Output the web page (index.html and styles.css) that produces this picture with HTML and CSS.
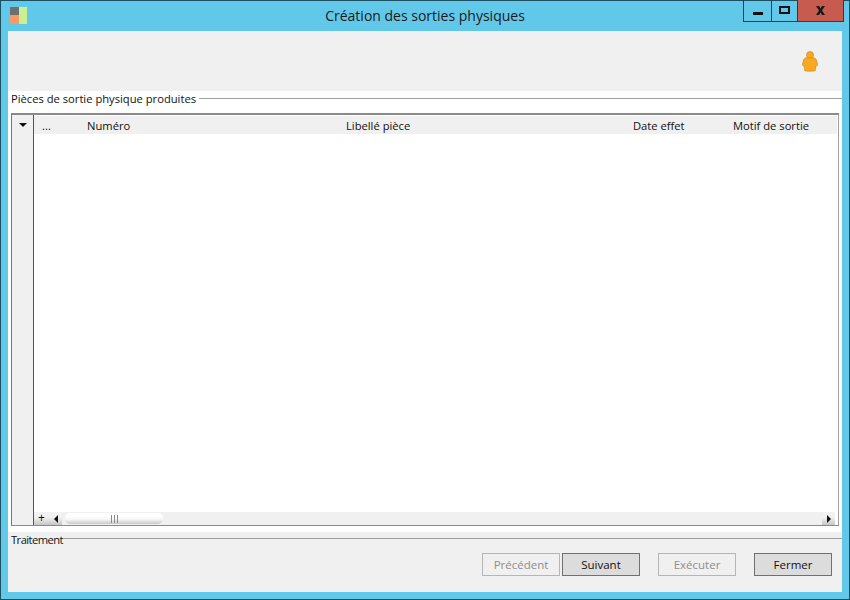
FILE: index.html
```html
<!DOCTYPE html>
<html lang="fr">
<head>
<meta charset="utf-8">
<title>Création des sorties physiques</title>
<link rel="stylesheet" href="styles.css">
</head>
<body>
<div class="window">
  <header class="titlebar">
    <svg class="app-icon" width="17" height="17" viewBox="0 0 17 17"><rect x="0" y="0" width="9" height="8" fill="#6f6f6f"/><rect x="0" y="8" width="9" height="9" fill="#f79a63"/><rect x="9" y="0" width="8" height="17" fill="#ccf08f"/></svg>
    <h1 class="title">Création des sorties physiques</h1>
    <div class="controls">
      <div class="ctl ctl-min"><span class="min-glyph"></span></div>
      <div class="ctl ctl-max"><span class="max-glyph"></span></div>
      <div class="ctl ctl-close"><svg width="11" height="9" viewBox="0 0 11 9"><path d="M1 0h3l1.500 2.500L7 0h3L7 4.500 10 9H7L5.500 6.500 4 9H1l3-4.500z" fill="#1a1a1a"/></svg></div>
    </div>
  </header>
  <main class="client">
    <div class="toolbar">
      <svg class="user" width="16" height="21" viewBox="0 0 16 21"><circle cx="8" cy="4" r="3.500" fill="#f9a825" stroke="#d98a10" stroke-width=".7"/><path d="M4 6.800h8c1.500.4 2.200 1.500 2.700 3.200l.9 3.800c-.2 1-1 1.300-2 1.400l-.4 4.600c-3 .5-7.400 .5-10.400 0L2.400 15.200c-1-.1-1.800-.4-2-1.400L1.300 10C1.800 8.300 2.500 7.200 4 6.800z" fill="#f9a825" stroke="#d98a10" stroke-width=".7"/></svg>
    </div>
    <section class="pieces">
      <div class="legend"><span>Pièces de sortie physique produites</span><i class="rule"></i></div>
      <div class="grid">
        <div class="gutter"><span class="tri-down"></span></div>
        <div class="table">
          <div class="thead">
            <span class="col c1">...</span>
            <span class="col c2">Numéro</span>
            <span class="col c3">Libellé pièce</span>
            <span class="col c4">Date effet</span>
            <span class="col c5">Motif de sortie</span>
          </div>
          <div class="tbody"></div>
          <div class="hscroll">
            <span class="plus">+</span>
            <span class="arrow"><span class="tri-left"></span></span>
            <div class="track"><div class="thumb"><span class="grip"></span></div></div>
            <span class="arrow"><span class="tri-right"></span></span>
          </div>
        </div>
      </div>
    </section>
    <section class="process">
      <div class="legend legend-t"><span>Traitement</span><i class="rule"></i></div>
      <div class="actions">
        <button class="btn off" disabled>Précédent</button>
        <button class="btn on">Suivant</button>
        <button class="btn off run" disabled>Exécuter</button>
        <button class="btn on close">Fermer</button>
      </div>
    </section>
  </main>
</div>
</body>
</html>
```
FILE: styles.css
```css
* { box-sizing: border-box; }
html, body { margin: 0; padding: 0; }
body { width: 850px; height: 600px; overflow: hidden; font-family: "Open Sans", "Noto Sans", sans-serif; font-size: 11.2px; color: #111; }
.window { width: 850px; height: 600px; display: flex; flex-direction: column; background: #62c8ea; border: 1px solid #1d4f63; padding: 0 7px 7px 7px; }
.titlebar { height: 30px; flex: none; display: flex; align-items: flex-start; position: relative; }
.app-icon { margin: 6px 0 0 2px; }
.title { position: absolute; left: 0; right: 0; top: 5px; margin: 0; text-align: center; font-size: 14px; line-height: 20px; font-weight: 400; color: #1a1a1a; }
.controls { position: absolute; top: -1px; right: -2px; display: flex; height: 22px; border: 1px solid #21404f; border-top: 0; }
.ctl { height: 21px; display: flex; align-items: center; justify-content: center; }
.ctl-min { width: 28px; border-right: 1px solid #21404f; }
.ctl-max { width: 26px; border-right: 1px solid #21404f; }
.ctl-close { width: 45px; background: #c75b50; }
.min-glyph { width: 10px; height: 3px; background: #111; margin-top: 6px; }
.max-glyph { width: 11px; height: 8px; border: 2px solid #111; margin-top: -2px; }
.client { flex: 1; background: #f0f0f0; display: flex; flex-direction: column; min-height: 0; }
.toolbar { height: 60px; flex: none; display: flex; justify-content: flex-end; align-items: flex-start; padding: 20px 24px 0 0; }
.pieces { height: 441px; flex: none; background: #fff; padding: 0 3px 6px 3px; display: flex; flex-direction: column; }
.legend { height: 16px; flex: none; display: flex; align-items: center; gap: 3px; line-height: 16px; margin-right: -3px; }
.legend span { white-space: nowrap; }
.rule { flex: 1; height: 1px; background: #a0a0a0; margin-bottom: 2px; }
.grid { flex: 1; min-height: 0; display: flex; border: 1px solid #a0a0a0; border-top: 2px solid #8a8a8a; margin: 6px 0 0 0; border-left: 1px solid #777; border-bottom: 1px solid #8a8a8a; }
.gutter { width: 22px; flex: none; background: #f0f0f0; border-right: 1px solid #555; padding: 8px 0 0 7px; }
.tri-down { display: block; width: 0; height: 0; border-left: 4px solid transparent; border-right: 4px solid transparent; border-top: 4px solid #111; }
.table { flex: 1; min-width: 0; display: flex; flex-direction: column; }
.thead { height: 18px; flex: none; background: #f0f0f0; margin-right: 1px; margin-top: 1px; position: relative; display: grid; grid-template-columns: 53px 259px 287px 100px 1fr; align-items: center; }
.col { padding-left: 8px; white-space: nowrap; }
.c2, .c3, .c4, .c5 { padding-left: 0; }
.tbody { flex: 1; min-height: 0; background: #fff; }
.hscroll { height: 13px; flex: none; background: #f0f0f0; display: flex; align-items: center; margin-right: 3px; }
.plus { width: 15px; height: 13px; line-height: 12px; text-align: center; font-size: 12px; color: #111; background: linear-gradient(#f2f2f2 40%, #c6c6c6); }
.arrow { width: 13px; height: 13px; flex: none; display: flex; align-items: center; justify-content: center; background: linear-gradient(#f2f2f2 40%, #c6c6c6); }
.tri-left { width: 0; height: 0; border-top: 4px solid transparent; border-bottom: 4px solid transparent; border-right: 4px solid #111; }
.tri-right { width: 0; height: 0; border-top: 4px solid transparent; border-bottom: 4px solid transparent; border-left: 4px solid #111; }
.track { flex: 1; min-width: 0; height: 13px; background: #f0f0f0; padding: 1px 0; }
.thumb { width: 98px; height: 11px; border-radius: 5px; background: linear-gradient(#fff 30%, #f4f4f4 60%, #c8c8c8); display: flex; justify-content: center; align-items: center; margin-left: 3px; }
.grip { width: 7px; height: 8px; background: repeating-linear-gradient(90deg, #8a8a8a 0 1px, transparent 1px 3px); }
.process { flex: 1; min-height: 0; padding: 0 0 0 3px; display: flex; flex-direction: column; }
.legend-t { height: 15px; gap: 0; margin-right: 0; }
.legend-t span { letter-spacing: -.55px; }
.actions { display: flex; padding: 6px 10px 0 471px; }
.btn { height: 23px; width: 78px; padding: 0; font: inherit; font-size: 11.5px; flex: none; background: #dcdcdc; border: 1px solid #707070; color: #111; }
.btn.off { background: #f0f0f0; border-color: #b5b5b5; color: #8d8d8d; }
.on { margin-left: 2px; }
.run { margin-left: 18px; }
.close { margin-left: 18px; }
```
